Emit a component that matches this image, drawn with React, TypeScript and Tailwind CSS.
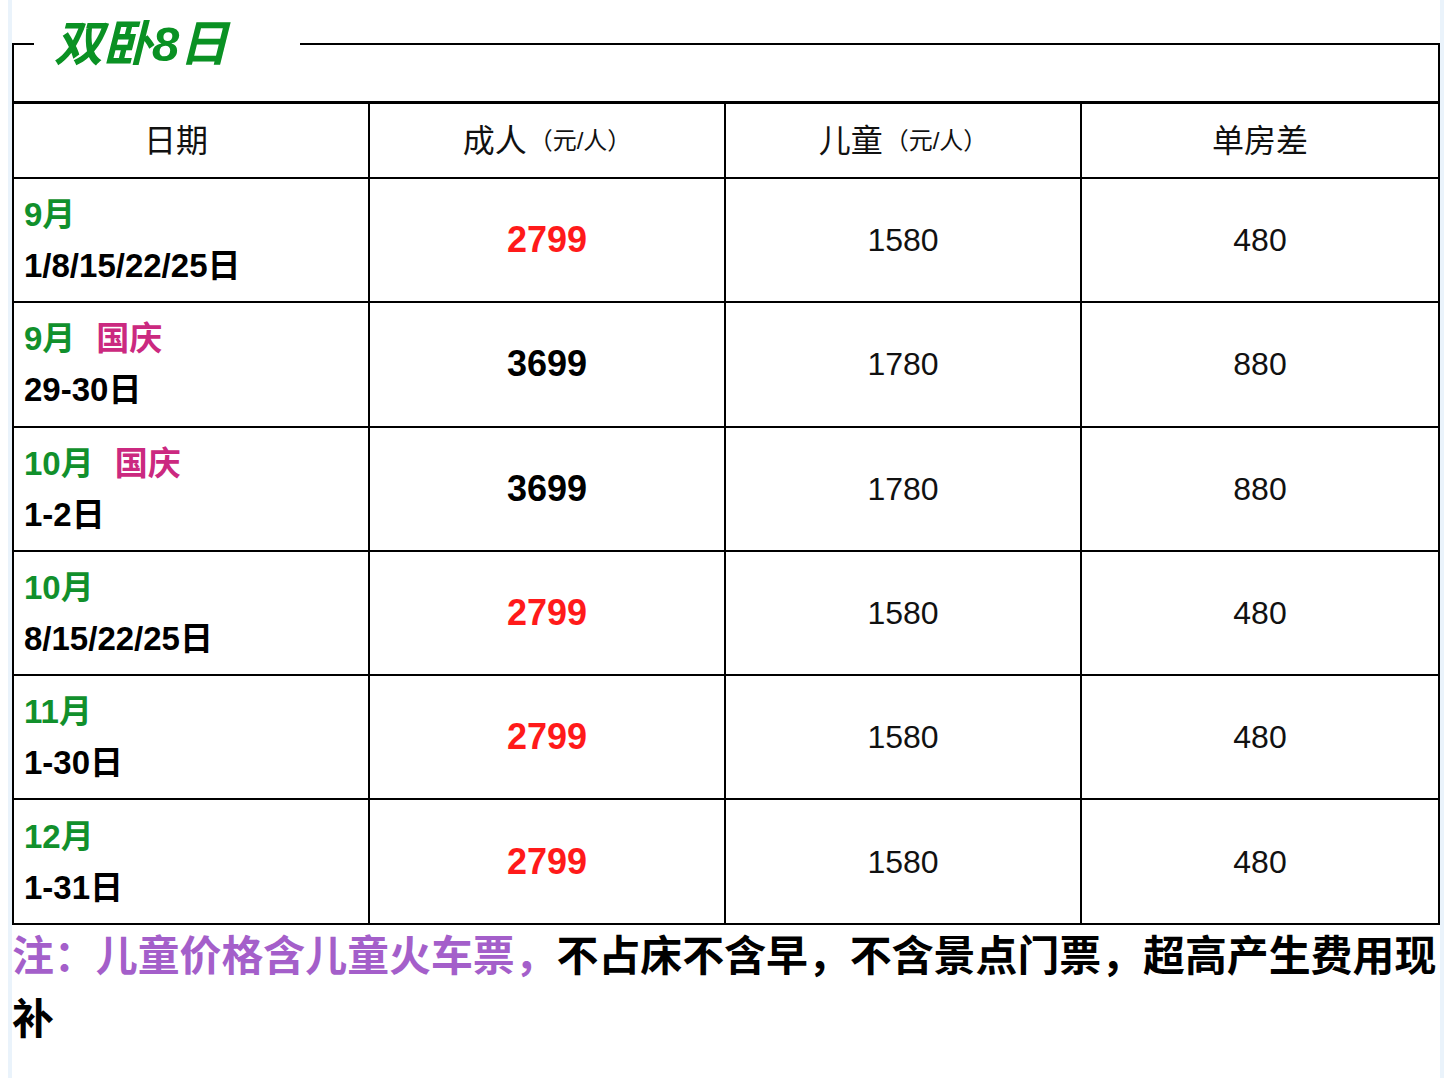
import * as React from "react";

type Row = {
  month: string;
  holiday?: boolean;
  days: string;
  adult: string;
  adultRed: boolean;
  child: string;
  single: string;
};

const rows: Row[] = [
  { month: "9月", days: "1/8/15/22/25日", adult: "2799", adultRed: true, child: "1580", single: "480" },
  { month: "9月", holiday: true, days: "29-30日", adult: "3699", adultRed: false, child: "1780", single: "880" },
  { month: "10月", holiday: true, days: "1-2日", adult: "3699", adultRed: false, child: "1780", single: "880" },
  { month: "10月", days: "8/15/22/25日", adult: "2799", adultRed: true, child: "1580", single: "480" },
  { month: "11月", days: "1-30日", adult: "2799", adultRed: true, child: "1580", single: "480" },
  { month: "12月", days: "1-31日", adult: "2799", adultRed: true, child: "1580", single: "480" },
];

function HeaderCell({ children, last, className = "" }: { children: React.ReactNode; last?: boolean; className?: string }) {
  return (
    <div
      className={
        "h-[75px] flex items-center justify-center border-b-2 border-black text-[32px] text-[#111] " +
        (last ? "" : "border-r-2 ") +
        className
      }
    >
      {children}
    </div>
  );
}

function Unit() {
  return <span className="text-[24px] ml-[2px]">（元/人）</span>;
}

export default function App() {
  return (
    <div className="min-h-[1078px] bg-white [font-family:'Liberation_Sans','Noto_Sans_CJK_SC',sans-serif]">
      <div className="ml-[8px] w-[1436px] min-h-[1078px] bg-[#eaf3fb] pl-[4px]">
        <div className="w-[1428px] min-h-[1078px] bg-white">
          {/* title bar with the box's top edge */}
          <div className="flex h-[88px] items-center">
            <div className="w-[22px] h-[45px] self-end border-t-2 border-l-2 border-black" />
            <div className="w-[266px] pl-[20px] text-[49px] leading-[88px] font-bold italic text-[#0a9123]">
              双卧8日
            </div>
            <div className="flex-1 h-[45px] self-end border-t-2 border-r-2 border-black" />
          </div>
          <div className="h-[13px] border-l-2 border-r-2 border-black" />

          {/* price table */}
          <div className="grid grid-cols-4 border-t-[3px] border-l-2 border-r-2 border-black">
            <HeaderCell className="pr-[30px]">日期</HeaderCell>
            <HeaderCell>
              成人
              <Unit />
            </HeaderCell>
            <HeaderCell>
              儿童
              <Unit />
            </HeaderCell>
            <HeaderCell last>单房差</HeaderCell>

            {rows.map((r, i) => (
              <React.Fragment key={i}>
                <div className="h-[124.3px] border-b-2 border-r-2 border-black pl-[10px] flex flex-col justify-center font-bold text-[33px] leading-[51px]">
                  <div className="text-[#11902c]">
                    {r.month}
                    {r.holiday && <span className="ml-[21px] text-[#cb2980]">国庆</span>}
                  </div>
                  <div className="text-black">{r.days}</div>
                </div>
                <div
                  className={
                    "h-[124.3px] border-b-2 border-r-2 border-black flex items-center justify-center font-bold text-[36px] " +
                    (r.adultRed ? "text-[#ff1a1a]" : "text-black")
                  }
                >
                  {r.adult}
                </div>
                <div className="h-[124.3px] border-b-2 border-r-2 border-black flex items-center justify-center text-[32px] text-[#111]">
                  {r.child}
                </div>
                <div className="h-[124.3px] border-b-2 border-black flex items-center justify-center text-[32px] text-[#111]">
                  {r.single}
                </div>
              </React.Fragment>
            ))}
          </div>

          <p className="text-[41.9px] leading-[63px] font-bold text-black">
            <span className="text-[#a45fca]">注：儿童价格含儿童火车票，</span>
            <span>不占床不含早，不含景点门票，超高产生费用现</span>
            <span>补</span>
          </p>
        </div>
      </div>
    </div>
  );
}
